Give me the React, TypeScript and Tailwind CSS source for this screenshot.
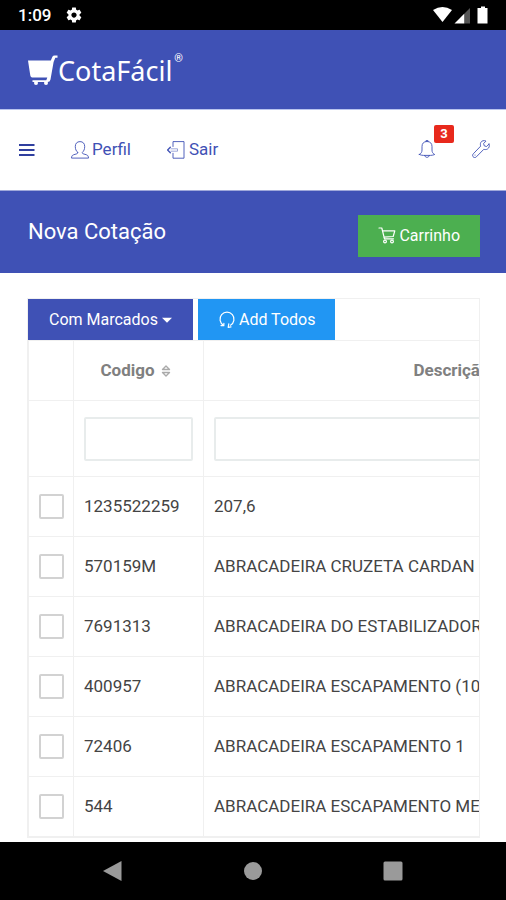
import { useState } from 'react';
import type { ReactNode } from 'react';

interface Produto {
    codigo: string;
    descricao: string;
}

const produtos: Produto[] = [
    { codigo: '1235522259', descricao: '207,6' },
    { codigo: '570159M', descricao: 'ABRACADEIRA CRUZETA CARDAN' },
    { codigo: '7691313', descricao: 'ABRACADEIRA DO ESTABILIZADOR' },
    { codigo: '400957', descricao: 'ABRACADEIRA ESCAPAMENTO (100MM)' },
    { codigo: '72406', descricao: 'ABRACADEIRA ESCAPAMENTO 1' },
    { codigo: '544', descricao: 'ABRACADEIRA ESCAPAMENTO MERCEDES' },
];

// Thin line icon on an 18px grid
function LineIcon({ children }: { children: ReactNode }) {
    return (
        <svg
            className="h-[18px] w-[18px] shrink-0"
            viewBox="0 0 18 18"
            fill="none"
            stroke="currentColor"
            strokeWidth="0.9"
            strokeLinecap="round"
            strokeLinejoin="round"
            aria-hidden="true"
        >
            {children}
        </svg>
    );
}

function StatusBar() {
    return (
        <div className="flex h-[30px] shrink-0 items-center justify-between bg-black pr-4 pl-[18px] text-white">
            <div className="flex items-center gap-[14px]">
                <span className="text-[17px] leading-5 font-medium">1:09</span>
                <svg className="h-[18px] w-[18px]" viewBox="0 0 24 24" fill="currentColor" aria-hidden="true">
                    <path d="M19.43 12.98c.04-.32.07-.64.07-.98s-.03-.66-.07-.98l2.11-1.65c.19-.15.24-.42.12-.64l-2-3.46c-.12-.22-.39-.3-.61-.22l-2.49 1c-.52-.4-1.08-.73-1.69-.98l-.38-2.65C14.46 2.18 14.25 2 14 2h-4c-.25 0-.46.18-.49.42l-.38 2.65c-.61.25-1.17.59-1.69.98l-2.49-1c-.23-.09-.49 0-.61.22l-2 3.46c-.13.22-.07.49.12.64l2.11 1.65c-.04.32-.07.65-.07.98s.03.66.07.98l-2.11 1.65c-.19.15-.24.42-.12.64l2 3.46c.12.22.39.3.61.22l2.49-1c.52.4 1.08.73 1.69.98l.38 2.65c.03.24.24.42.49.42h4c.25 0 .46-.18.49-.42l.38-2.65c.61-.25 1.17-.59 1.69-.98l2.49 1c.23.09.49 0 .61-.22l2-3.46c.12-.22.07-.49-.12-.64l-2.11-1.65zM12 15.5c-1.93 0-3.5-1.57-3.5-3.5s1.57-3.5 3.5-3.5 3.5 1.57 3.5 3.5-1.57 3.5-3.5 3.5z" />
                </svg>
            </div>
            <svg className="h-[18px] w-[58px]" viewBox="0 0 58 18" fill="#fff" aria-hidden="true">
                <path d="M1 4Q10.500-2 20 4L10.500 16Z" />
                <path d="M38 2V17.500H32V8Z" fill="#555" />
                <path d="M32.200 7.800V17.500H22.500Z" />
                <path d="M49 .500h4V2h2.500v15.500h-10V2H49z" />
            </svg>
        </div>
    );
}

function Header() {
    return (
        <header className="flex h-20 shrink-0 items-center border-b border-[#b9c4ee] bg-[#3f51b5] px-7 pt-[2px]">
            <a href="#" className="flex items-center text-white">
                <svg className="h-[31px] w-[30px]" viewBox="0 0 30 31" aria-hidden="true">
                    <path d="M0 5.500h22.800l1.600-3.700Q25 .5 26.500.5h3v2.200H27.300L25.600 7 22.500 24.500Q22 27 19.500 27H4.500v-1.800H18.300L19.300 22.500H4.200Q2.700 22.500 2.300 20.500Z" fill="#fff" />
                    <circle cx="8" cy="28" r="2" fill="#fff" />
                    <circle cx="18" cy="28" r="2" fill="#fff" />
                </svg>
                <span className="font-['Noto_Sans'] text-[27px] leading-9">CotaFácil</span>
                <span className="ml-[2px] self-start text-[11px] leading-3">®</span>
            </a>
        </header>
    );
}

function NavBar() {
    return (
        <nav className="flex h-[81px] shrink-0 items-center justify-between border-b border-[#9fa8da] bg-white pr-4 pl-[19px] text-[17px] text-[#3f51b5]">
            <div className="flex items-center gap-9">
                <button type="button" aria-label="Menu">
                    <svg className="h-4 w-4" viewBox="0 0 16 16" stroke="#303f9f" strokeWidth="2" aria-hidden="true">
                        <path d="M0 3h15.500M0 8h15.500M0 13h15.500" />
                    </svg>
                </button>
                <a href="#perfil" className="flex items-center gap-[3px]">
                    <LineIcon>
                        <path d="M6.600 11.300C5.200 10.200 4.300 8.200 4.300 5.500 4.300 2.500 6 .6 9 .6s4.700 1.900 4.700 4.900c0 2.700-.9 4.700-2.300 5.800-.3.700.1 1.300.8 1.500l3.300 1c1.300.5 1.900 1.300 2 3.300H.5c.1-2 .7-2.800 2-3.300l3.300-1c.7-.2 1.100-.8.8-1.500z" />
                    </LineIcon>
                    Perfil
                </a>
                <a href="#sair" className="flex items-center gap-1">
                    <LineIcon>
                        <path d="M6 5.500V.6h11v16.600H6v-4.900" />
                        <path d="M3.300 6.300.6 9l2.700 2.700" strokeWidth="1.300" />
                        <path d="M4 7.800h6.500v2.400H4" strokeWidth="0.500" />
                    </LineIcon>
                    Sair
                </a>
            </div>
            <div className="flex items-center gap-9 pb-[3px]">
                <button type="button" className="relative" aria-label="Notificações">
                    <LineIcon>
                        <path d="M1.300 14.500c1.900-1 2.700-2.400 2.700-4.500V6.500C4 3.500 5.700 1.500 9 1.500s5 2 5 5V10c0 2.100.8 3.500 2.700 4.500-1.200.6-2.700.8-4.200.9h-7c-1.500-.1-3-.3-4.200-.9z" />
                        <path d="M8 1.500V.6h2v.9M6.600 15.400c.3 2.700 4.500 2.700 4.800 0" />
                    </LineIcon>
                    <span className="absolute -top-[15px] left-4 h-[18px] w-5 rounded-xs bg-[#e8291c] text-center text-[13px] leading-[18px] font-bold text-white">
                        3
                    </span>
                </button>
                <button type="button" aria-label="Configurações">
                    <LineIcon>
                        <path d="M17 4.100 14.600 6.500l-2.300-.6-.7-2.400L14 1.100C11.800.1 9.700.7 8.800 2.500c-.6 1.200-.5 2.500-.1 3.600L1.300 13.800c-2.100 2.200 1 5.200 3.100 3l7.400-7.500c1.300.4 2.700.4 3.800-.4 1.600-1.100 2.300-3 1.400-4.800z" />
                        <path d="M3 15.100h.1" />
                    </LineIcon>
                </button>
            </div>
        </nav>
    );
}

function TitleBar() {
    return (
        <div className="flex h-[82px] shrink-0 items-center justify-between bg-[#3f51b5] pr-[26px] pl-7 text-white">
            <h1 className="text-[22px] leading-7">Nova Cotação</h1>
            <button type="button" className="mt-2 flex h-[42px] items-center gap-[3px] bg-[#4caf50] px-5 text-base">
                <LineIcon>
                    <g strokeWidth="1.200">
                        <path d="M1 1h2.800l2.700 10.800h9M4.500 3.800h12.300l-1.600 5.700-9.300.6" />
                        <circle cx="7" cy="14.500" r="1.400" />
                        <circle cx="14" cy="14.500" r="1.400" />
                    </g>
                </LineIcon>
                Carrinho
            </button>
        </div>
    );
}

function SortIcon() {
    return (
        <svg className="h-3 w-[10px]" viewBox="0 0 10 12" fill="none" stroke="#aaa" strokeWidth="1.400" strokeLinejoin="round" aria-hidden="true">
            <path d="M1.500 4.500 5 1l3.500 3.500zM1.500 7.500 5 11l3.500-3.500z" />
        </svg>
    );
}

function HeadCell({ label }: { label: string }) {
    return (
        <th scope="col" className="border border-[#f0f0f0] p-0 font-bold text-[#808080]">
            <button type="button" className="inline-flex items-center gap-[6px] pr-[6px]">
                {label}
                <SortIcon />
            </button>
        </th>
    );
}

function ProdutosTable() {
    const [codigo, setCodigo] = useState('');
    const [descricao, setDescricao] = useState('');

    const filtrados = produtos.filter(
        p => p.codigo.includes(codigo) && p.descricao.toLowerCase().includes(descricao.toLowerCase())
    );

    return (
        <table className="w-[970px] table-fixed border-collapse text-[17px] text-[#444]">
            <colgroup>
                <col className="w-[45px]" />
                <col className="w-[130px]" />
                <col className="w-[518px]" />
                <col />
            </colgroup>
            <thead>
                <tr className="h-[60px]">
                    <td className="border border-[#f0f0f0]" />
                    <HeadCell label="Codigo" />
                    <HeadCell label="Descrição" />
                    <HeadCell label="Marca" />
                </tr>
                <tr className="h-[76px]">
                    <td className="border border-[#f0f0f0]" />
                    <td className="border border-[#f0f0f0] px-[10px]">
                        <input
                            type="text"
                            aria-label="Filtrar por codigo"
                            value={codigo}
                            onChange={e => setCodigo(e.target.value)}
                            className="block h-11 w-full rounded-xs border-2 border-[#e8ecec] bg-white px-2"
                        />
                    </td>
                    <td className="border border-[#f0f0f0] px-[10px]">
                        <input
                            type="text"
                            aria-label="Filtrar por descrição"
                            value={descricao}
                            onChange={e => setDescricao(e.target.value)}
                            className="block h-11 w-full rounded-xs border-2 border-[#e8ecec] bg-white px-2"
                        />
                    </td>
                    <td className="border border-[#f0f0f0]" />
                </tr>
            </thead>
            <tbody>
                {filtrados.map(p => (
                    <tr key={p.codigo} className="h-[60px]">
                        <td className="border border-[#f0f0f0] p-0">
                            <input
                                type="checkbox"
                                aria-label={`Marcar ${p.codigo}`}
                                className="mx-auto block h-[25px] w-[25px] appearance-none rounded-xs border-2 border-[#d2d2d2] bg-white checked:bg-[#3f51b5]"
                            />
                        </td>
                        <td className="border border-[#f0f0f0] px-[10px]">{p.codigo}</td>
                        <td className="border border-[#f0f0f0] px-[10px] whitespace-nowrap">{p.descricao}</td>
                        <td className="border border-[#f0f0f0]" />
                    </tr>
                ))}
            </tbody>
        </table>
    );
}

function AndroidNav() {
    return (
        <div className="flex h-[58px] shrink-0 items-center justify-center gap-[120px] bg-black text-[#9a9a9a]">
            <button type="button" aria-label="Voltar">
                <svg className="h-5 w-5" viewBox="0 0 20 20" fill="currentColor" aria-hidden="true">
                    <path d="M18.500 0v20L0 10z" />
                </svg>
            </button>
            <button type="button" aria-label="Início">
                <svg className="h-5 w-5" viewBox="0 0 20 20" fill="currentColor" aria-hidden="true">
                    <circle cx="10" cy="10" r="9" />
                </svg>
            </button>
            <button type="button" aria-label="Recentes">
                <svg className="h-5 w-5" viewBox="0 0 20 20" fill="currentColor" aria-hidden="true">
                    <rect x="0.500" y="0.500" width="19" height="19" rx="1.500" />
                </svg>
            </button>
        </div>
    );
}

export default function App() {
    return (
        <div className="flex h-screen flex-col bg-white font-[Roboto,sans-serif]">
            <StatusBar />
            <Header />
            <NavBar />
            <TitleBar />

            <main className="min-h-0 flex-1 overflow-hidden pt-[25px] pr-[26px] pl-[27px]">
                <div className="overflow-x-auto border border-[#f0f0f0] [scrollbar-width:none]">
                    {/* Bulk actions */}
                    <div className="flex gap-[5px] text-base text-white">
                        <button type="button" aria-haspopup="menu" className="flex h-[41px] items-center gap-1 bg-[#3f51b5] px-[21px]">
                            Com Marcados
                            <svg className="h-[6px] w-[10px]" viewBox="0 0 11 6" fill="currentColor" aria-hidden="true">
                                <path d="M0 .500h11L5.500 6z" />
                            </svg>
                        </button>
                        <button type="button" className="flex h-[41px] items-center gap-[3px] bg-[#2196f3] px-5">
                            <LineIcon>
                                <g strokeWidth="1.200">
                                    <path d="M5.500 14.200A7 7 0 1 1 12.500 14.200" />
                                    <path d="M3 14.600l2.800.1.100-2.400M10.800 12.800 10.200 16.300l2.800-.5" />
                                </g>
                            </LineIcon>
                            Add Todos
                        </button>
                    </div>
                    <ProdutosTable />
                </div>
            </main>

            <AndroidNav />
        </div>
    );
}
